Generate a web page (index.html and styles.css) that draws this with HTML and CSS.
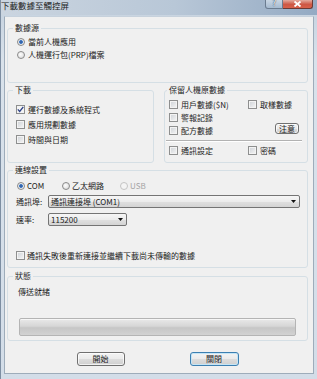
FILE: index.html
```html
<!DOCTYPE html>
<html lang="zh-Hant">
<head>
    <meta charset="UTF-8">
    <title>下載數據至觸控屏</title>
    <link rel="stylesheet" href="styles.css">
</head>
<body>
    <div class="window">
        <div class="titlebar">
            <span class="title">下載數據至觸控屏</span>
            <div class="caption-btns">
                <span class="cap help">?</span>
                <span class="cap close">
                    <svg width="9" height="6" viewBox="0 0 9 6"><path d="M1.5 0.5 L7.5 5.5 M7.5 0.5 L1.5 5.5" stroke="#fff" stroke-width="1.8"/></svg>
                </span>
            </div>
        </div>
        <div class="dialog">
            <fieldset class="group g-source">
                <legend>數據源</legend>
                <div class="opt"><span class="radio on"></span>當前人機應用</div>
                <div class="opt"><span class="radio"></span>人機運行包(PRP)檔案</div>
            </fieldset>

            <div class="pair">
                <fieldset class="group g-download">
                    <legend>下載</legend>
                    <div class="opt"><span class="check on"><svg width="7" height="7" viewBox="0 0 7 7"><path d="M0.8 3.4 L2.7 5.4 L6.3 0.8" fill="none" stroke="#2b3f86" stroke-width="1.3"/></svg></span>運行數據及系統程式</div>
                    <div class="opt"><span class="check"></span>應用規劃數據</div>
                    <div class="opt"><span class="check"></span>時間與日期</div>
                </fieldset>

                <fieldset class="group g-keep">
                    <legend>保留人機原數據</legend>
                    <div class="keep-grid">
                        <div class="opt"><span class="check"></span>用戶數據($N)</div>
                        <div class="opt"><span class="check"></span>取樣數據</div>
                        <div class="opt"><span class="check"></span>警報記錄</div>
                        <button class="btn note">注意</button>
                        <div class="opt"><span class="check"></span>配方數據</div>
                    </div>
                    <div class="sep"></div>
                    <div class="keep-grid">
                        <div class="opt"><span class="check"></span>通訊設定</div>
                        <div class="opt"><span class="check"></span>密碼</div>
                    </div>
                </fieldset>
            </div>

            <fieldset class="group g-conn">
                <legend>連線設置</legend>
                <div class="conn-radios">
                    <div class="opt com"><span class="radio on"></span>COM</div>
                    <div class="opt eth"><span class="radio"></span>乙太網路</div>
                    <div class="opt usb"><span class="radio disabled"></span>USB</div>
                </div>
                <div class="field">
                    <span class="field-label">通訊埠:</span>
                    <div class="combo wide">通訊連接埠 (COM1)<svg class="arrow" width="5" height="3" viewBox="0 0 5 3"><path d="M0 0 H5 L2.5 3 Z" fill="#111"/></svg></div>
                </div>
                <div class="field rate">
                    <span class="field-label">速率:</span>
                    <div class="combo short">115200<svg class="arrow" width="5" height="3" viewBox="0 0 5 3"><path d="M0 0 H5 L2.5 3 Z" fill="#111"/></svg></div>
                </div>
                <div class="opt retry"><span class="check"></span>通訊失敗後重新連接並繼續下載尚未傳輸的數據</div>
            </fieldset>

            <fieldset class="group g-status">
                <legend>狀態</legend>
                <div class="status-text">傳送就緒</div>
                <div class="progress"></div>
            </fieldset>

            <div class="actions">
                <button class="btn action">開始</button>
                <button class="btn action default">關閉</button>
            </div>
        </div>
    </div>
</body>
</html>
```

FILE: styles.css
```css
body {
    margin: 0;
    background: #fff;
    font-family: "Noto Sans CJK TC", "Noto Sans", sans-serif;
    font-size: 8px;
    color: #1b1b1b;
}
.window {
    width: 317px;
    height: 379px;
    box-sizing: border-box;
    display: flex;
    flex-direction: column;
    background: linear-gradient(#c3d0de, #d9e2eb 60px, #d3dde8);
    border-left: 1px solid #7d8ea2;
}
.titlebar {
    height: 15px;
    flex: none;
    display: flex;
    align-items: flex-start;
    background: linear-gradient(90deg, #cbd5e0, #b8c7d7 55%, #94aac3);
}
.title {
    font-size: 8.5px;
    line-height: 11px;
}
.caption-btns {
    margin-left: auto;
    margin-right: 4px;
    display: flex;
}
.cap {
    box-sizing: border-box;
    height: 9px;
    display: flex;
    align-items: center;
    justify-content: center;
}
.cap.help {
    width: 18px;
    border: 1px solid #6b7c90;
    border-top: none;
    border-radius: 0 0 0 3px;
    background: linear-gradient(#c9d6e4, #a6bad0);
    color: #fff;
    font-family: "DejaVu Sans", sans-serif;
    font-size: 8px;
    line-height: 8px;
    text-shadow: 0 0 1px #2a3a4c, 0 0 1px #2a3a4c;
}
.cap.close {
    width: 30px;
    border: 1px solid #6a3a36;
    border-top: none;
    border-left: none;
    border-radius: 0 0 3px 0;
    background: linear-gradient(#e3aa9e, #cd5744 55%, #d9604a);
}
.dialog {
    flex: 1;
    margin: 1px 3px 5px 3px;
    padding: 6px 5px 0 2px;
    background: #f0f0f0;
    border: 1px solid #9eacba;
    border-top-color: #c6d1dc;
    display: flex;
    flex-direction: column;
}
.group {
    margin: 0;
    min-width: 0;
    border: 1px solid #d5dfe5;
    border-radius: 3px;
}
.group legend {
    padding: 0 2px;
    line-height: 10px;
    font-size: 8px;
}
.opt {
    display: flex;
    align-items: center;
    height: 13px;
    white-space: nowrap;
}
.radio {
    width: 8px;
    height: 8px;
    box-sizing: border-box;
    flex: none;
    margin-right: 3px;
    border: 1px solid #8a8a8a;
    border-radius: 50%;
    background: radial-gradient(circle at 40% 40%, #fdfdfd, #d6d6d6);
}
.radio.on {
    background: radial-gradient(circle, #284f92 0, #4a80c6 1.6px, #f2f2f2 2.3px, #d2d2d2 100%);
}
.radio.disabled {
    border-color: #c4c4c4;
    background: #f4f4f4;
}
.check {
    width: 9px;
    height: 9px;
    box-sizing: border-box;
    flex: none;
    margin-right: 3px;
    display: flex;
    align-items: center;
    justify-content: center;
    border: 1px solid #8e8f8f;
    background: linear-gradient(135deg, #cdd1d6, #f6f6f6);
    box-shadow: inset 0 0 0 1px #f3f3f3;
}
.check.on {
    background: #f4f4f4;
}

/* 數據源 */
.g-source {
    padding: 2px 5px 21px 5px;
}
.g-source .opt {
    padding-left: 4px;
}

/* 下載 + 保留 */
.pair {
    display: flex;
    gap: 10px;
    margin-top: 2px;
}
.g-download {
    width: 147px;
    box-sizing: border-box;
    flex: none;
    padding: 7px 4px 15px 5px;
}
.g-download .opt {
    height: 15px;
    padding-left: 3px;
}
.g-keep {
    flex: 1;
    padding: 3px 8px 5px 2px;
}
.keep-grid {
    display: grid;
    grid-template-columns: 79px 1fr;
    grid-auto-rows: 13px;
}
.keep-grid .opt {
    padding-left: 2px;
}
.note {
    grid-column: 2;
    grid-row: 2 / span 2;
    justify-self: end;
    align-self: end;
    width: 24px;
    height: 11px;
    margin-bottom: 3px;
    line-height: 9px;
}
.sep {
    margin: 3px -3px 2px -1px;
    border-top: 1px solid #b2b2b2;
    border-bottom: 1px solid #fff;
}

/* 連線設置 */
.g-conn {
    margin-top: 2px;
    padding: 4px 7px 5px 5px;
}
.conn-radios {
    display: flex;
}
.conn-radios .radio {
    margin-right: 2px;
}
.conn-radios .com {
    width: 45px;
    padding-left: 4px;
}
.conn-radios .eth {
    width: 58px;
}
.conn-radios .usb {
    color: #a5a5a5;
}
.field {
    display: flex;
    align-items: center;
    height: 13px;
    margin-top: 3px;
}
.field.rate {
    margin-top: 5px;
}
.field-label {
    width: 32px;
    padding-left: 3px;
    flex: none;
}
.combo {
    box-sizing: border-box;
    height: 13px;
    display: flex;
    align-items: center;
    padding: 0 3px 0 2px;
    border: 1px solid #747474;
    border-radius: 2px;
    background: linear-gradient(#f6f6f6, #ececec 50%, #e0e0e0 51%, #d4d4d4);
    white-space: nowrap;
}
.combo.wide {
    flex: 1;
}
.combo.short {
    width: 79px;
}
.combo .arrow {
    margin-left: auto;
}
.retry {
    margin-top: 23px;
    padding-left: 3px;
}
.retry .check {
    margin-right: 2px;
}

/* 狀態 */
.g-status {
    margin-top: 3px;
    padding: 5px 11px 4px 5px;
}
.status-text {
    padding-left: 5px;
    line-height: 11px;
}
.progress {
    height: 18px;
    box-sizing: border-box;
    margin: 21px 0 0 6px;
    border: 1px solid #b4b4b4;
    border-radius: 2px;
    background: linear-gradient(#e9e9e9, #d6d6d6 45%, #c6c6c6 55%, #d2d2d2);
    box-shadow: inset 0 1px 0 #f6f6f6;
}

/* buttons */
.btn {
    box-sizing: border-box;
    padding: 0;
    font-family: inherit;
    font-size: 8px;
    color: #1b1b1b;
    border: 1px solid #707070;
    border-radius: 3px;
    background: linear-gradient(#f3f3f3, #ebebeb 50%, #dddddd 51%, #cfcfcf);
    box-shadow: inset 0 0 0 1px rgba(255, 255, 255, 0.7);
}
.actions {
    display: flex;
    justify-content: center;
    gap: 65px;
    margin-top: 11px;
}
.action {
    width: 48px;
    height: 14px;
    line-height: 12px;
}
.action.default {
    width: 49px;
    border-color: #3c7fb1;
    box-shadow: inset 0 0 0 1px #c4e5f6;
}
```
